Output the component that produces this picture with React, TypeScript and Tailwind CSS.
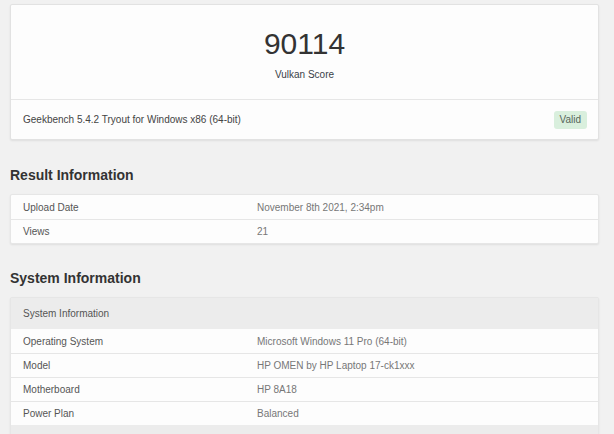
const resultRows = [
  { label: "Upload Date", value: "November 8th 2021, 2:34pm" },
  { label: "Views", value: "21" },
];

const systemRows = [
  { label: "Operating System", value: "Microsoft Windows 11 Pro (64-bit)" },
  { label: "Model", value: "HP OMEN by HP Laptop 17-ck1xxx" },
  { label: "Motherboard", value: "HP 8A18" },
  { label: "Power Plan", value: "Balanced" },
];

const InfoRow = ({ label, value }: { label: string; value: string }) => (
  <div className="flex h-[24px] items-center border-t border-[#e6e6e6] first:border-t-0 text-[10px]">
    <div className="w-[246px] pl-[12px] text-[#555]">{label}</div>
    <div className="flex-1 text-[#777]">{value}</div>
  </div>
);

const SectionTitle = ({ children }: { children: string }) => (
  <h2 className="text-[14px] leading-[20px] font-bold text-[#333]">{children}</h2>
);

export default function App() {
  return (
    <div className="min-h-[434px] bg-[#f1f1f1] pt-[4px] pl-[10px] pr-[15px] font-['Liberation_Sans',Arial,sans-serif]">
      <div className="rounded-[2px] border border-[#e2e2e2] bg-[#fdfdfd] shadow-[0_1px_2px_rgba(0,0,0,0.08)]">
        <div className="flex flex-col items-center pt-[24px] pb-[17px] border-b border-[#e6e6e6]">
          <div className="text-[30px] leading-[30px] text-[#333]">90114</div>
          <div className="mt-[9px] text-[10px] leading-[14px] text-[#3a3f48]">Vulkan Score</div>
        </div>
        <div className="flex h-[39px] items-center justify-between pl-[12px] pr-[11px]">
          <span className="text-[10px] text-[#444]">Geekbench 5.4.2 Tryout for Windows x86 (64-bit)</span>
          <span className="rounded-[3px] bg-[#d9efdd] px-[6px] py-[3px] text-[10px] leading-[12px] text-[#56655a]">Valid</span>
        </div>
      </div>

      <div className="mt-[25px]">
        <SectionTitle>Result Information</SectionTitle>
        <div className="mt-[9px] rounded-[2px] border border-[#e6e6e6] bg-[#fdfdfd] shadow-[0_1px_2px_rgba(0,0,0,0.08)]">
          {resultRows.map((r) => (
            <InfoRow key={r.label} label={r.label} value={r.value} />
          ))}
        </div>
      </div>

      <div className="mt-[24px]">
        <SectionTitle>System Information</SectionTitle>
        <div className="mt-[9px] rounded-[2px] border border-[#e6e6e6] bg-[#fdfdfd] shadow-[0_1px_2px_rgba(0,0,0,0.08)]">
          <div className="flex h-[31px] items-center bg-[#ececec] pl-[12px] text-[10px] text-[#555]">
            System Information
          </div>
          <div className="flex flex-col">
            {systemRows.map((r) => (
              <InfoRow key={r.label} label={r.label} value={r.value} />
            ))}
          </div>
          <div className="h-[30px] bg-[#ececec]" />
        </div>
      </div>
    </div>
  );
}
